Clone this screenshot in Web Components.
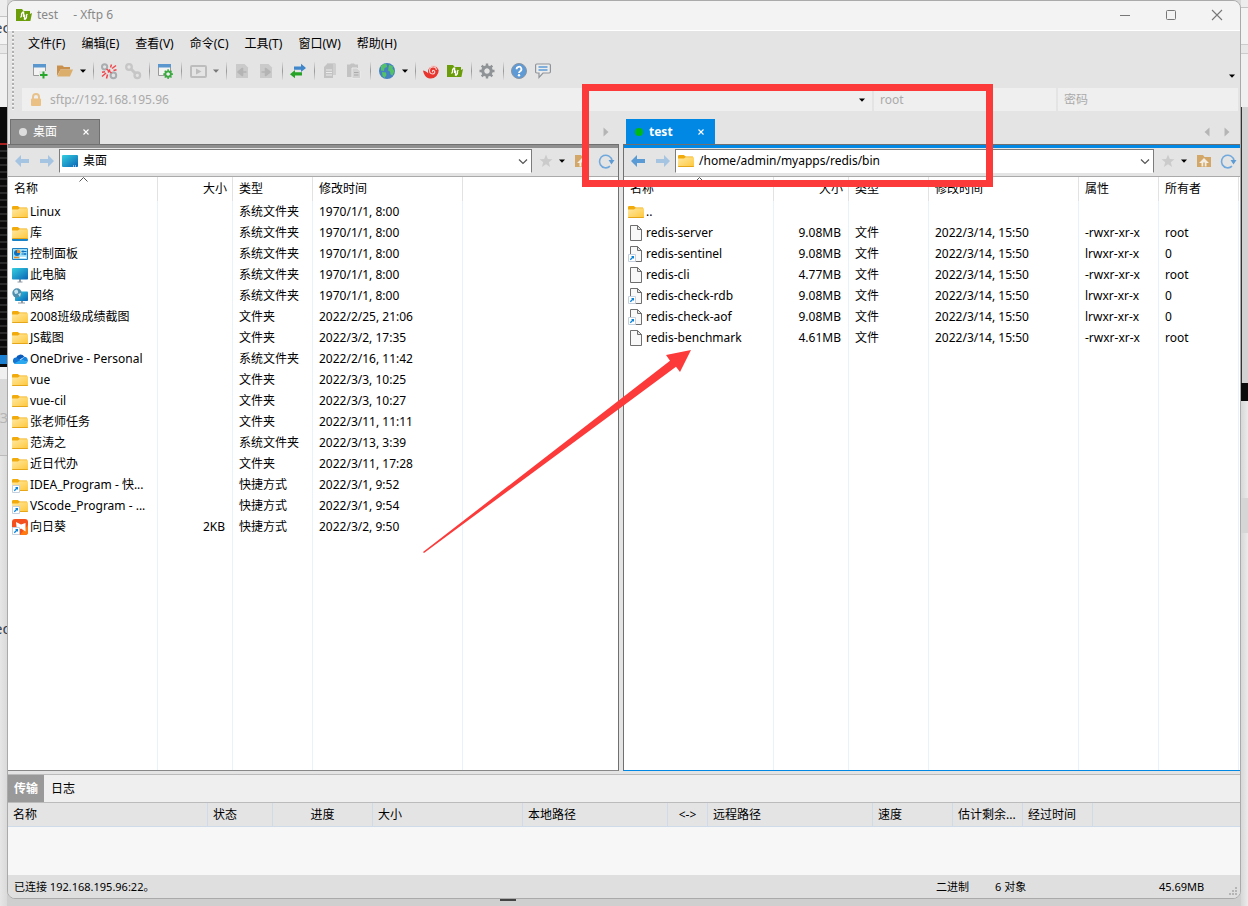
<!DOCTYPE html>
<html lang="zh-CN">
<head>
<meta charset="utf-8">
<title>test - Xftp 6</title>
<style>
  body { margin: 0; }
</style>
</head>
<body>
<xf-desktop>
  <xf-window>
    <xf-titlebar slot="title" session="test" app="- Xftp 6"></xf-titlebar>
    <xf-commands slot="commands"></xf-commands>
    <xf-pane slot="local" kind="local" tab="桌面" path="桌面"></xf-pane>
    <xf-pane slot="remote" kind="remote" tab="test" path="/home/admin/myapps/redis/bin" active></xf-pane>
    <xf-transfers slot="transfers"></xf-transfers>
    <xf-status slot="status">
      <span slot="link">已连接 192.168.195.96:22。</span>
      <span slot="mode">二进制</span>
      <span slot="count">6 对象</span>
      <span slot="size">45.69MB</span>
    </xf-status>
  </xf-window>
  <xf-marks slot="marks"></xf-marks>
</xf-desktop>

<script>
const FOLDER = `<path d="M0 3.2a1.2 1.2 0 0 1 1.2-1.2h4.6l2 1.6H15v4H0z" fill="#f2ab0c"/><path d="M0 5.5h6l1.6-1.2H16v8.5a1 1 0 0 1-1 1H1a1 1 0 0 1-1-1z" fill="url(#fg)"/><path d="M0 13h16v.2a.8.8 0 0 1-.8.8H.8a.8.8 0 0 1-.8-.8z" fill="#e5a61a"/>`;
const FG = `<defs><linearGradient id="fg" x1="0" y1="0" x2="1" y2="1"><stop offset="0" stop-color="#ffe9a3"/><stop offset="1" stop-color="#ffc73a"/></linearGradient></defs>`;
const SG = `<defs><linearGradient id="sg" x1="0" y1="0" x2="1" y2="1"><stop offset="0" stop-color="#33cfe0"/><stop offset="1" stop-color="#0a63b4"/></linearGradient></defs>`;
const LINK = `<path d="M.5 8.500h7v7h-7z" fill="#fff" stroke="#c4d0de"/><path d="M2.300 13.700l3-3" fill="none" stroke="#0a84d8" stroke-width="1.300"/><path d="M3 10h3v3z" fill="#0a84d8"/>`;
const FILE = `<path d="M2.500.5h7l4 4v11h-11z" fill="#f8f8f8" stroke="#6e6e6e"/><path d="M9.500.5v4h4z" fill="#e3e3e3" stroke="#6e6e6e"/>`;
const LEAF = `<path d="M0 2h6l1.500 2H14v3l2-1-1.600 8H0z" fill="#6b9c0a"/><path d="M4.500 10.500l1-1.500V7.500A2.200 2.200 0 0 1 7.600 5.300V10M11.300 7l-.8 1.200v1.600a2.200 2.200 0 0 1-2 2.200V7.500M7.600 5.300L6.500 4.600M8.500 12l1.200.6" fill="none" stroke="#fff" stroke-width="1.300"/>`;
const GEAR = (c, hole) => `<g fill="none" stroke="${c}"><circle cx="8" cy="8" r="4.200" stroke-width="3.200"/><path d="M8 .5v3M8 12.500v3M.5 8h3M12.500 8h3M2.700 2.700l2 2M11.300 11.300l2 2M2.700 13.300l2-2M11.300 4.700l2-2" stroke-width="2.400"/></g><circle cx="8" cy="8" r="2.400" fill="${hole}"/>`;
const ICONS = {
  folder: FG + FOLDER,
  library: FG + FOLDER + `<path d="M0 14h16v1a1 1 0 0 1-1 1H1a1 1 0 0 1-1-1z" fill="#1a83c8"/>`,
  folderlink: FG + FOLDER + LINK,
  file: FILE,
  filelink: FILE + LINK,
  control: `<path d="M.5 2.500h15v11H.5z" fill="#9fe0f6" stroke="#1c7fc4"/><circle cx="5" cy="7" r="3" fill="#0e6fbd"/><path d="M5 7V3.600A3.400 3.400 0 0 1 8.400 7z" fill="#f08a1d"/><path d="M9.500 5.500h5M9.500 8h5M11 4.500v2M13 7v2" stroke="#0e6fbd" stroke-width="1.200"/><path d="M2 11.500h5" stroke="#f08a1d" stroke-width="1.500"/><path d="M8 11.500h6" stroke="#fff" stroke-width="1.500"/>`,
  monitor: SG + `<path d="M5.500 14.500h5v1h-5zM7 12h2v3H7z" fill="#8f9aa5"/><rect y="1" width="16" height="11.500" rx=".8" fill="url(#sg)"/>`,
  desktop: SG + `<rect y="2" width="16" height="12" rx="1" fill="url(#sg)"/><path d="M11 13h1M13 13h1" stroke="#fff"/>`,
  network: SG + `<path d="M6 14.500h7v1H6zM9 12h2v3H9z" fill="#8f9aa5"/><rect x="3" y="3.500" width="13" height="9.500" rx=".8" fill="url(#sg)"/><circle cx="5" cy="5" r="4.700" fill="#4e8fae"/><path d="M2 3q3-3 4 0t-3 3zM6 6l3-1-1 4z" fill="#c5e3ee"/>`,
  cloud: `<path d="M4 7a4.600 4.600 0 0 1 8.300-1.300L7 9z" fill="#0b5cba"/><path d="M3.500 13A3.300 3.300 0 0 1 4 6.500l5 2.500-5 4z" fill="#1374d2"/><path d="M12.300 5.700h.4A3.700 3.700 0 0 1 15.500 11L9 9z" fill="#1685e0"/><path d="M2 12.400l7.500-4 6 2.600a2.600 2.600 0 0 1-2.500 2H3.500z" fill="#2aa8f0"/>`,
  sunflower: `<rect width="16" height="16" rx="3" fill="#f4501e"/><path d="M16 6v7a3 3 0 0 1-3 3H8z" fill="#ff7a10"/><path d="M4 3l5 2.500L13.500 4v8.500L9 9.500 5 12z" fill="#fff"/>` + LINK,
  leaf: LEAF,
  newsession: `<path d="M1.500 1.500h12v11h-12z" fill="#f3f3f3" stroke="#9a9a9a"/><path d="M1 1h13v3.500H1z" fill="#5b97cf"/><path d="M7 8h9v8H7z" fill="#e6e6e6"/><path d="M11.500 8.500v7M8 12h7.500" stroke="#26a62a" stroke-width="2"/>`,
  open: `<path d="M0 2.500h5.500l1.500 1.500H13v2.500H3.500L0 13z" fill="#c98f4c"/><path d="M3.500 6.500H16l-3 7H.3z" fill="#dcae6c"/>`,
  unlink: `<g fill="none" stroke="#a9adb0" stroke-width="2"><circle cx="3.600" cy="3.800" r="2.600"/><circle cx="12.400" cy="12.400" r="2.800"/></g><g stroke="#f0474f" stroke-width="1.500"><path d="M5.500 6l5 4M7 9.500l2-3"/><path d="M9.500 4.500l1-3M11 5.500l4-3M12.500 7.500l3-.8M6.500 11.500l-1 4M5 10l-4 3.500M4 8.700l-3 .5"/></g>`,
  link: `<g fill="none" stroke="#c6c6c6" stroke-width="2.300"><circle cx="4" cy="4" r="2.800"/><circle cx="12.300" cy="12.300" r="2.800"/><path d="M5.500 5.500l5 5" stroke-width="3"/></g>`,
  settings: `<path d="M1.500 1.500h12v11h-12z" fill="#f3f3f3" stroke="#9a9a9a"/><path d="M1 1h13v3.500H1z" fill="#5b97cf"/><g transform="translate(6 6) scale(.64)">${GEAR('#3cab41', '#eee')}</g>`,
  play: `<rect x="1" y="3" width="15" height="11" rx="1" fill="none" stroke="#bdbdbd" stroke-width="2"/><path d="M6 5.500l5.500 3L6 11.500z" fill="#bdbdbd"/>`,
  docleft: `<path d="M2 1h8.500L14 4.500V15H2z" fill="#cacaca"/><path d="M12.500 9H8M8.500 5.500v7l-4.500-3.500z" fill="#b4b4b4" stroke="#b4b4b4" stroke-width="1.600" stroke-linejoin="round"/>`,
  docright: `<path d="M2 1h8.500L14 4.500V15H2z" fill="#cacaca"/><path d="M3.500 9H8M7.500 5.500v7l4.500-3.500z" fill="#b4b4b4" stroke="#b4b4b4" stroke-width="1.600" stroke-linejoin="round"/>`,
  transfer: `<path d="M4 3.500h7V.8L16 5l-5 4V6.700H4z" fill="#3f86cb"/><path d="M12 9.300H5V7L0 11.300l5 4v-2.800h7z" fill="#26a326"/>`,
  copy: `<path d="M5 0h8l1 1v11H5z" fill="#cfcfcf"/><path d="M2 4l3-3h6v14H2z" fill="#c3c3c3"/><path d="M4 7h6M4 9.500h6M4 12h6" stroke="#ececec" stroke-width="1.200"/>`,
  paste: `<path d="M1 1.500h3l1-1h3l1 1h3V14H1z" fill="#c3c3c3"/><path d="M6 5h5l3.500 3v7.500H6z" fill="#d2d2d2" stroke="#e9e9e9"/><path d="M8 9.500h4.500M8 12h4.500" stroke="#aaa"/>`,
  globe: `<circle cx="8" cy="8" r="8" fill="#4381bf"/><path d="M2 3q3-3 5.500-2L8 4 5.500 5 5 8l-3-.5zM3 9l4 .5.500 2.500-2 3-2-2zM10 1.500l4 2-.5 2L15.500 8l-2 4.500-2-1L11 8.500 9 7.500l.500-3z" fill="#53c168"/>`,
  swirl: `<path d="M0 7.500C3 8 4 9 5.200 10.500A5.500 5.500 0 1 1 15.700 7 8 8 0 0 1 7 15.400C3 15 .8 12 0 7.500z" fill="#e8352e"/><path d="M13.500 7a3.500 3.500 0 1 0-4 4c2.500 0 3-2.800 1.300-3.500-1.500-.4-1.700 1-1 1.700M15.500 6.500c0-3-4-5-7.500-3.500" fill="none" stroke="#f5d5d2" stroke-width="1.100"/>`,
  gear: GEAR('#8f9396', '#e4e4e4'),
  help: `<circle cx="8" cy="8" r="7.500" fill="#5e9ad6" stroke="#8795a3"/><path d="M5.600 6.200a2.400 2.400 0 1 1 3.600 2Q8 9 8 10" fill="none" stroke="#fff" stroke-width="1.800"/><circle cx="8" cy="12.300" r="1.200" fill="#fff"/>`,
  chat: `<path d="M1.800 1h12.400q1.200 0 1.200 1.200v6.600q0 1.200-1.200 1.200H8l-4 4.500V10H1.800Q.6 10 .6 8.800V2.200Q.6 1 1.800 1z" fill="#ececec" stroke="#8f9499" stroke-width="1.200"/><path d="M3.500 4h9M3.500 7h9" stroke="#5e9ad6" stroke-width="1.500"/>`,
  lock: `<path d="M5 7V5a3 3 0 0 1 6 0v2" fill="none" stroke="#e8c28c" stroke-width="2"/><rect x="3" y="6.500" width="10" height="7.500" rx="1" fill="#eac085"/>`,
  caret: `<path d="M5 6.500h6L8 9.800z" fill="currentColor"/>`,
  left: `<path d="M1 8l6-6v4h8v4H7v4z" fill="currentColor"/>`,
  right: `<path d="M15 8L9 2v4H1v4h8v4z" fill="currentColor"/>`,
  triright: `<path d="M5.500 3.500l5 4.500-5 4.500z" fill="#b5b5b5"/>`,
  trileft: `<path d="M10.500 3.500l-5 4.500 5 4.500z" fill="#b5b5b5"/>`,
  star: `<path d="M8 1.500l1.800 4.600 4.700.2-3.700 3 1.300 4.700L8 11.300 3.900 14l1.300-4.700-3.700-3 4.700-.2z" fill="#cbcbcb"/>`,
  home: `<path d="M1 2h6l1.500 2H15v10H1z" fill="#d3a768"/><path d="M8 5l5 5h-2.500v3.500h-5V10H3z" fill="#f3ede4"/><path d="M8 9.500V14" stroke="#d3a768" stroke-width="1.500"/>`,
  refresh: `<path d="M12 13.200A6.300 6.300 0 1 1 14 7.500" fill="none" stroke="#72a9dc" stroke-width="1.600"/><path d="M10.500 7h6L13.500 11.500z" fill="#5d9bd5"/>`,
  chevron: `<path d="M4 6.500l4 4 4-4" fill="none" stroke="#555" stroke-width="1.200"/>`,
  close: `<path d="M5.500 5.500l5 5M10.500 5.500l-5 5" stroke="currentColor" stroke-width="1.100"/>`,
  min: `<path d="M3 8.500h10" stroke="#777"/>`,
  max: `<rect x="3.500" y="3.500" width="9" height="9" rx="1" fill="none" stroke="#777"/>`,
  quit: `<path d="M3 3l10 10M13 3L3 13" stroke="#777" stroke-width="1.100"/>`
};

const BASE = `:host,*{box-sizing:border-box}
button{appearance:none;border:0;background:none;padding:0;margin:0;color:inherit;font:inherit;display:flex;align-items:center;justify-content:center}
input{border:0;background:none;padding:0;margin:0;outline:0;font:inherit;color:inherit;min-width:0}
th{font-weight:400}`;

class Base extends HTMLElement {
  connectedCallback() {
    if (this.shadowRoot) return;
    this.attachShadow({ mode: 'open' }).innerHTML = `<style>${BASE}${this.css()}</style>${this.html()}`;
  }
}

class XfIcon extends Base {
  css() { return `:host{display:block;flex:none;width:16px;height:16px}svg{display:block;overflow:visible}`; }
  html() { return `<svg width="16" height="16" viewBox="0 0 16 16" aria-hidden="true">${ICONS[this.getAttribute('name')]}</svg>`; }
}
customElements.define('xf-icon', XfIcon);

const icon = n => `<xf-icon name="${n}"></xf-icon>`;
const btn = (n, label, cls = '') => `<button class="${cls}" aria-label="${label}">${icon(n)}</button>`;

class XfDesktop extends Base {
  css() { return `
    :host{display:grid;grid-template-columns:7px minmax(0,1fr) 7px;min-height:100vh;position:relative;overflow:hidden;background:#dcdcdc;
      font:12px/16px "Noto Sans","Noto Sans CJK SC",sans-serif;color:#000}
    .edge{display:flex;flex-direction:column;overflow:hidden;background:linear-gradient(90deg,#e6e6e6,#dadada);white-space:nowrap;font-size:15px;line-height:20px;color:#3a4350}
    .edge:last-of-type{background:linear-gradient(90deg,#d8d8d8,#ebebeb)}
    .edge div{flex:none;overflow:hidden}
    .bar{height:23px;border-bottom:1px solid #c4c4c4;background:#ededed}
    .url{height:27px;background:#f3f3f3;text-indent:-6px}
    .rule{height:10px;border:1px solid #ccc;border-width:1px 0;background:#e8e8e8}
    .blank{height:53px;background:#f0f0f0}
    .dark{height:36px;background:#0b0b0b}
    .red{height:2px;background:#a82020}
    .dark2{height:206px;background:repeating-linear-gradient(#0b0b0b 0 5px,#2b2b2b 5px 7px)}
    .task{height:16px;background:linear-gradient(#0b0b0b 4px,#1d7fd0 4px 13px,#0b0b0b 13px)}
    .page{height:77px;padding-top:28px;background:#d9d9d9;border-bottom:1px solid #bbb;color:#b5b5b5;text-indent:-9px}
    .space{height:162px}
    .word{height:24px;text-indent:-6px}
    .scroll{height:276px;background:#d2d2d2;border-left:1px solid #333}
    .strip{height:18px;background:#0b0b0b}
    .gap{height:97px}
    .thumb{height:35px;background:#d6d6d6}
    .main{display:flex;flex-direction:column;padding-bottom:5px;background:linear-gradient(#d8d8d8,#cfcfcf)}
    .main::after{content:"";width:16px;height:2px;margin-left:493px;background:#444}
    ::slotted(xf-window){flex:1}`; }
  html() { return `
    <div class="edge"><div class="bar" style="height:17px"></div><div class="url">ec</div><div class="rule"></div><div class="blank"></div><div class="dark"></div><div class="red"></div><div class="dark2"></div><div class="task"></div><div class="blank" style="height:12px"></div><div class="page">13</div><div class="space"></div><div class="word">ed</div></div>
    <div class="main"><slot></slot></div>
    <div class="edge"><div class="bar" style="height:8px"></div><div class="url" style="height:36px"></div><div class="rule"></div><div class="blank"></div><div class="scroll"></div><div class="strip"></div><div class="gap"></div><div class="thumb"></div></div>
    <slot name="marks"></slot>`; }
}

class XfWindow extends Base {
  css() { return `
    :host{display:flex;flex-direction:column;overflow:hidden;border:1px solid #aaa;border-radius:8px;background:#e4e4e4}
    .panes{flex:1;display:flex;gap:4px;min-height:300px}
    ::slotted(xf-pane){min-width:0}
    ::slotted(xf-pane[kind=local]){flex:611 1 0}
    ::slotted(xf-pane[kind=remote]){flex:617 1 0}`; }
  html() { return `<slot name="title"></slot><slot name="commands"></slot>
    <main class="panes"><slot name="local"></slot><slot name="remote"></slot></main>
    <slot name="transfers"></slot><slot name="status"></slot>`; }
}

class XfTitlebar extends Base {
  css() { return `
    :host{display:flex;align-items:center;height:30px;padding:0 15px 1px 8px;background:#f3f3f3;border-bottom:1px solid #fff;color:#888}
    .name{margin:0 15px 0 5px}
    .ctl{margin-left:auto;display:flex;gap:30px}`; }
  html() { return `${icon('leaf')}<span class="name">${this.getAttribute('session')}</span><span>${this.getAttribute('app')}</span>
    <div class="ctl">${btn('min', '最小化')}${btn('max', '最大化')}${btn('quit', '关闭')}</div>`; }
}

class XfCommands extends Base {
  css() { return `
    :host{display:block;padding:0 2px 7px 4px}
    .body{display:flex;gap:8px}
    .grip{width:2px;background:repeating-linear-gradient(#b0b0b0 0 2px,#f6f6f6 2px 3px,transparent 3px 4px)}
    .rows{flex:1;min-width:0}
    nav{display:flex;gap:16px;height:26px;padding-left:6px}
    .tools{display:flex;align-items:center;height:28px;margin-bottom:3px;padding-left:6px}
    .tools button{width:24px;height:24px}
    .tools .split{margin-left:1px}
    .tools .drop{width:12px;overflow:hidden}
    .tools .off{color:#777}
    .tools .more{margin-left:auto;margin-top:9px}
    hr{width:1px;height:18px;margin:0 3px 0 4px;border:0;background:linear-gradient(#ddd,#999,#ddd)}
    .address{display:grid;grid-template-columns:minmax(0,1fr) 182px 180px;gap:2px;color:#aaa}
    .address label{display:flex;align-items:center;gap:6px;height:23px;padding:0 2px 0 6px;background:#efefef}
    .address input{flex:1}
    .address input::placeholder{color:#aaa;opacity:1}
    .address button{color:#000}`; }
  html() {
    const menus = ['文件(F)', '编辑(E)', '查看(V)', '命令(C)', '工具(T)', '窗口(W)', '帮助(H)'];
    return `<div class="body"><div class="grip"></div><div class="rows">
    <nav>${menus.map(m => `<button>${m}</button>`).join('')}</nav>
    <div class="tools">${btn('newsession', '新建会话')}${btn('open', '打开', 'split')}${btn('caret', '打开选项', 'drop')}<hr>
      ${btn('unlink', '断开')}${btn('link', '重新连接')}<hr>${btn('settings', '属性')}<hr>${btn('play', '同步', 'split')}${btn('caret', '同步选项', 'drop off')}<hr>
      ${btn('docleft', '向左传输')}${btn('docright', '向右传输')}<hr>${btn('transfer', '传输')}<hr>${btn('copy', '复制')}${btn('paste', '粘贴')}<hr>
      ${btn('globe', '语言', 'split')}${btn('caret', '语言选项', 'drop')}<hr>${btn('swirl', 'Xshell')}${btn('leaf', 'Xftp')}<hr>${btn('gear', '选项')}<hr>
      ${btn('help', '帮助')}${btn('chat', '反馈')}${btn('caret', '更多', 'drop more')}</div>
    <div class="address">
      <label>${icon('lock')}<input aria-label="地址" value="sftp://192.168.195.96">${btn('caret', '历史')}</label>
      <label><input aria-label="用户名" placeholder="root"></label>
      <label><input aria-label="密码" type="password" placeholder="密码"></label>
    </div></div></div>`;
  }
}

const LOCAL = [
  ['folder','Linux','','系统文件夹','1970/1/1, 8:00'],
  ['library','库','','系统文件夹','1970/1/1, 8:00'],
  ['control','控制面板','','系统文件夹','1970/1/1, 8:00'],
  ['monitor','此电脑','','系统文件夹','1970/1/1, 8:00'],
  ['network','网络','','系统文件夹','1970/1/1, 8:00'],
  ['folder','2008班级成绩截图','','文件夹','2022/2/25, 21:06'],
  ['folder','JS截图','','文件夹','2022/3/2, 17:35'],
  ['cloud','OneDrive - Personal','','系统文件夹','2022/2/16, 11:42'],
  ['folder','vue','','文件夹','2022/3/3, 10:25'],
  ['folder','vue-cil','','文件夹','2022/3/3, 10:27'],
  ['folder','张老师任务','','文件夹','2022/3/11, 11:11'],
  ['folder','范涛之','','系统文件夹','2022/3/13, 3:39'],
  ['folder','近日代办','','文件夹','2022/3/11, 17:28'],
  ['folderlink','IDEA_Program - 快...','','快捷方式','2022/3/1, 9:52'],
  ['folderlink','VScode_Program - ...','','快捷方式','2022/3/1, 9:54'],
  ['sunflower','向日葵','2KB','快捷方式','2022/3/2, 9:50']
];
const T = '2022/3/14, 15:50';
const REMOTE = [
  ['folder','..','','','','',''],
  ['file','redis-server','9.08MB','文件',T,'-rwxr-xr-x','root'],
  ['filelink','redis-sentinel','9.08MB','文件',T,'lrwxr-xr-x','0'],
  ['file','redis-cli','4.77MB','文件',T,'-rwxr-xr-x','root'],
  ['filelink','redis-check-rdb','9.08MB','文件',T,'lrwxr-xr-x','0'],
  ['filelink','redis-check-aof','9.08MB','文件',T,'lrwxr-xr-x','0'],
  ['file','redis-benchmark','4.61MB','文件',T,'-rwxr-xr-x','root']
];

class XfFiles extends Base {
  css() { return `
    :host{display:flex;background:#fff}
    table{width:100%;table-layout:fixed;border-collapse:separate;border-spacing:0}
    th,td{padding:0 0 0 6px;text-align:left;white-space:nowrap;overflow:hidden;border-right:1px solid #e8f2fc;vertical-align:middle}
    th:last-child,td:last-child{border-right:0}
    th{height:24px;border-right-color:#e2e2e2;position:relative}
    th svg{position:absolute;top:0;left:calc(50% - 4px)}
    td{height:21px}
    td:first-child{padding-left:4px}
    .item{display:flex;align-items:center;gap:2px}
    th.size{text-align:right;padding-right:5px}
    td.size{text-align:right;padding-right:7px}
    .fill td{height:auto}`; }
  html() {
    const remote = this.getAttribute('kind') === 'remote';
    const heads = ['名称','大小','类型','修改时间'].concat(remote ? ['属性','所有者'] : []);
    const widths = [150,75,80,150].concat(remote ? [80,80] : []);
    const rows = remote ? REMOTE : LOCAL;
    const size = i => i === 1 ? ' class="size"' : '';
    return `<table><colgroup>${widths.map(w => `<col style="width:${w}px">`).join('')}<col></colgroup>
      <thead><tr>${heads.map((h, i) => `<th${size(i)}>${h}${i ? '' : '<svg width="9" height="5"><path d="M.5 4.500l4-4 4 4" fill="none" stroke="#555"/></svg>'}</th>`).join('')}<th></th></tr></thead>
      <tbody>${rows.map(([ic, name, ...rest]) => `<tr><td><div class="item">${icon(ic)}<span>${name}</span></div></td>${rest.map((c, i) => `<td${size(i + 1)}>${c}</td>`).join('')}<td></td></tr>`).join('')}
      <tr class="fill">${widths.map(() => '<td></td>').join('')}<td></td></tr></tbody></table>`;
  }
}

class XfPane extends Base {
  css() { return `
    :host{display:flex;flex-direction:column;--tone:#8f8f8f;--rim:#707070;--foot:#888}
    :host([active]){--tone:#0088e4;--rim:#0088e4;--foot:#0088e4}
    .tabs{display:flex;align-items:flex-end;height:26px;padding:0 5px 0 2px}
    :host([active]) .tabs{padding-left:3px}
    .tab{display:flex;align-items:center;width:90px;height:25px;padding:0 5px 0 8px;background:var(--tone);border:1px solid var(--rim);border-bottom:0;color:#fff}
    :host([active]) .tab{width:89px;font-weight:700}
    .dot{width:8px;height:8px;margin-right:6px;border-radius:4px;background:#ddd}
    :host([active]) .dot{background:#00b816}
    .tab button{margin-left:auto}
    .scroll{margin-left:auto;display:flex;gap:4px;padding-bottom:4px}
    .frame{flex:1;display:flex;flex-direction:column;border-top:1px solid #707070;border-bottom:1px solid var(--foot)}
    :host([kind=local]) .frame{border-right:1px solid #707070}
    :host([kind=remote]) .frame{border-left:1px solid #707070}
    .line{height:3px;background:var(--tone)}
    .nav{display:flex;align-items:center;height:29px;padding:0 4px 2px 6px;border-bottom:1px solid #aaa}
    .back,.fwd{color:#a4c4e2;margin-right:9px}
    .fwd{margin-right:4px}
    :host([active]) .back{color:#5b9bd5}
    .combo{flex:1;display:flex;align-items:center;min-width:0;height:24px;padding:0 0 0 2px;background:#fff;border:1px solid #7c7c7c;border-bottom-color:#fff}
    .combo input{flex:1;padding-left:5px}
    .star{margin-left:6px}
    .home{margin:0 8px 0 4px}
    xf-files{flex:1}`; }
  html() {
    const kind = this.getAttribute('kind');
    return `<div class="tabs"><div class="tab"><span class="dot"></span><span>${this.getAttribute('tab')}</span>${btn('close', '关闭标签')}</div>
      <div class="scroll">${btn('trileft', '前一标签')}${btn('triright', '后一标签')}</div></div>
    <section class="frame"><div class="line"></div>
      <div class="nav">${btn('left', '后退', 'back')}${btn('right', '前进', 'fwd')}
        <label class="combo">${icon(kind === 'remote' ? 'folder' : 'desktop')}<input aria-label="路径" value="${this.getAttribute('path')}">${btn('chevron', '展开')}</label>
        ${btn('star', '收藏', 'star')}${btn('caret', '收藏选项')}${btn('home', '上级目录', 'home')}${btn('refresh', '刷新')}</div>
      <xf-files kind="${kind}"></xf-files></section>`;
  }
}

class XfTransfers extends Base {
  css() { return `
    :host{display:block;margin-top:3px;border-top:1px solid #bbb;background:#f7f7f7}
    .tabs{display:flex;height:28px;background:#efefef;border-bottom:1px solid #bbb}
    .tabs button{padding:0 7px}
    .tabs .on{background:#999;color:#fff;font-weight:700;padding:0 6px}
    .log{height:72px}
    table{width:100%;table-layout:fixed;border-collapse:separate;border-spacing:0}
    th{height:24px;padding:0 0 0 5px;text-align:left;white-space:nowrap;overflow:hidden;background:#e4e4e4;border-right:1px solid #d0dbea;border-bottom:1px solid #d0dbea}
    th:last-child{border-right:0}
    th.c{text-align:center;padding:0}`; }
  html() {
    const cols = [['名称',200],['状态',65],['进度',100,1],['大小',150],['本地路径',145],['&lt;-&gt;',40,1],['远程路径',165],['速度',80],['估计剩余...',70],['经过时间',70]];
    return `<div class="tabs"><button class="on">传输</button><button>日志</button></div>
      <div class="log"><table><colgroup>${cols.map(c => `<col style="width:${c[1]}px">`).join('')}<col></colgroup>
      <thead><tr>${cols.map(c => `<th${c[2] ? ' class="c"' : ''}>${c[0]}</th>`).join('')}<th></th></tr></thead></table></div>`;
  }
}

class XfStatus extends Base {
  css() { return `
    :host{display:grid;grid-template-columns:minmax(0,1fr) 59px 164px 81px;align-items:center;position:relative;height:23px;padding-left:6px;background:#dfdfdf;font-size:11px}
    svg{position:absolute;right:2px;bottom:2px}`; }
  html() { return `<slot name="link"></slot><slot name="mode"></slot><slot name="count"></slot><slot name="size"></slot>
    <svg width="9" height="9" fill="#b5b5b5"><path d="M6 0h2v2H6zM3 3h2v2H3zM6 3h2v2H6zM0 6h2v2H0zM3 6h2v2H3zM6 6h2v2H6z"/></svg>`; }
}

class XfMarks extends Base {
  css() { return `
    :host{position:absolute;left:0;top:0;pointer-events:none}
    svg{display:block}`; }
  html() { return `<svg width="1000" height="560" aria-hidden="true"><rect x="585.500" y="87.500" width="404" height="96" fill="none" stroke="#fc3a3a" stroke-width="7"/><path d="M423 552l247-191.300-4-5.700 25-5-11 22-4-5.300L424 553z" fill="#fc3a3a"/></svg>`; }
}

customElements.define('xf-files', XfFiles);
customElements.define('xf-pane', XfPane);
customElements.define('xf-titlebar', XfTitlebar);
customElements.define('xf-commands', XfCommands);
customElements.define('xf-transfers', XfTransfers);
customElements.define('xf-status', XfStatus);
customElements.define('xf-window', XfWindow);
customElements.define('xf-marks', XfMarks);
customElements.define('xf-desktop', XfDesktop);
</script>
</body>
</html>
